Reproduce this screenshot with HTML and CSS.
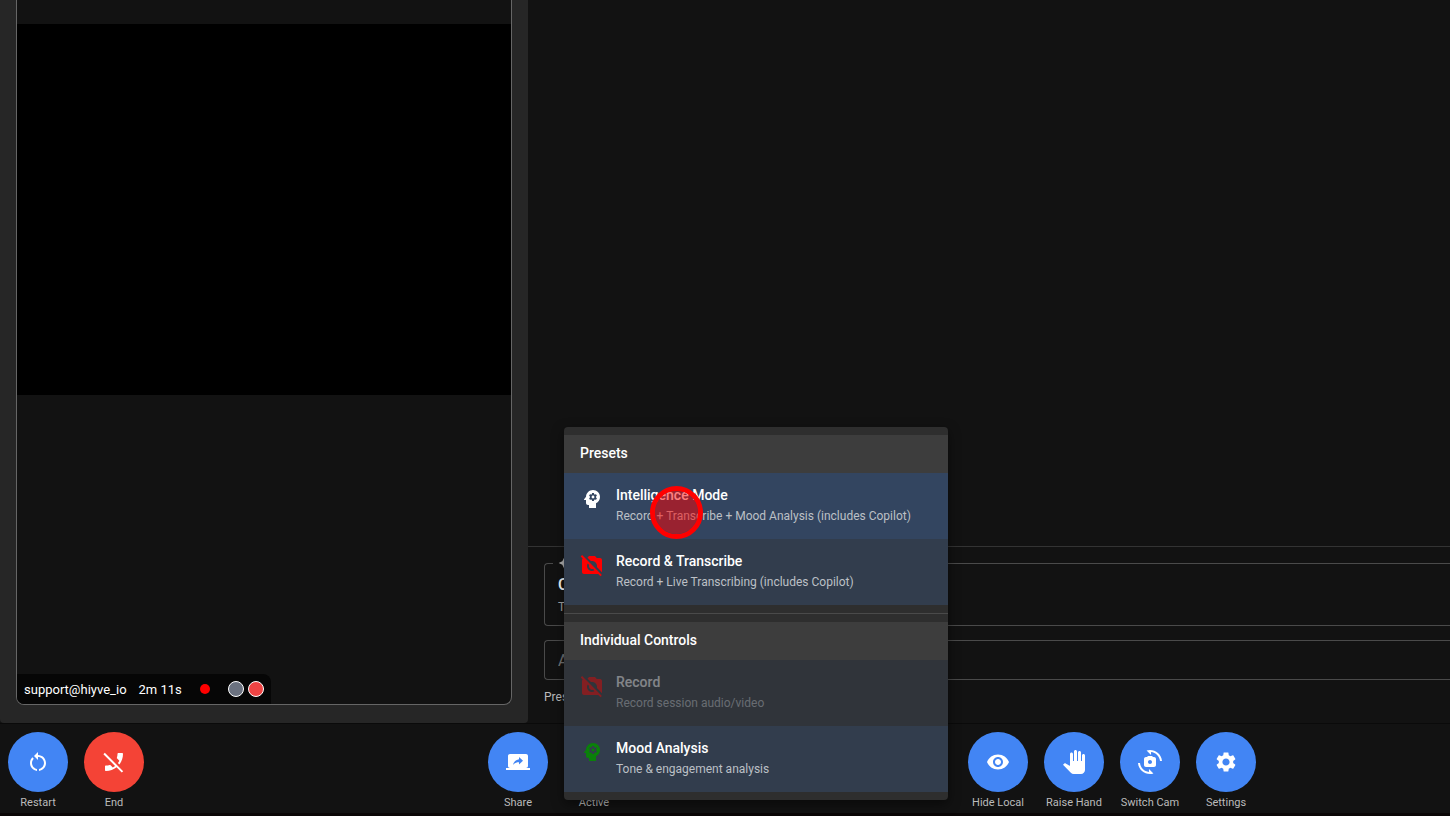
FILE: index.html
```html
<!DOCTYPE html>
<html lang="en">
<head>
    <meta charset="UTF-8">
    <meta name="viewport" content="width=device-width, initial-scale=1.0">
    <title>Hiyve Room</title>
    <link rel="stylesheet" href="styles.css">
</head>
<body>

    <!-- Shared icons -->
    <svg class="icon-defs" aria-hidden="true">
        <symbol id="icon-psychology" viewBox="0 0 24 24">
            <path d="M13 8.57c-.79 0-1.43.64-1.43 1.43s.64 1.43 1.43 1.43 1.43-.64 1.43-1.43-.64-1.43-1.43-1.43z"/>
            <path d="M13 3C9.25 3 6.2 5.94 6.02 9.64L4.1 12.2c-.25.33-.01.8.4.8H6v3c0 1.1.9 2 2 2h1v3h7v-4.68c2.36-1.12 4-3.53 4-6.32 0-3.87-3.13-7-7-7zm3 7c0 .13-.01.26-.02.39l.83.66c.08.06.1.16.05.25l-.8 1.39c-.05.09-.16.12-.24.09l-.99-.4c-.21.16-.43.29-.67.39L14 13.83c-.01.1-.1.17-.2.17h-1.6c-.1 0-.18-.07-.2-.17l-.15-1.06c-.25-.1-.47-.23-.68-.39l-.99.4c-.09.03-.2 0-.25-.09l-.8-1.39c-.05-.08-.03-.19.05-.25l.84-.66c-.01-.13-.02-.26-.02-.39s.02-.27.04-.39l-.85-.66c-.08-.06-.1-.16-.05-.26l.8-1.38c.05-.09.15-.12.24-.09l1 .4c.2-.15.43-.29.67-.39L12 6.17c.02-.1.1-.17.2-.17h1.6c.1 0 .18.07.2.17l.15 1.06c.24.1.46.23.67.39l1-.4c.09-.03.2 0 .24.09l.8 1.38c.05.09.03.2-.05.26l-.85.66c.03.12.04.25.04.39z"/>
        </symbol>
        <symbol id="icon-no-camera" viewBox="0 0 24 24">
            <path d="M10.94 8.12 7.48 4.66 9 3h6l1.83 2H20c1.1 0 2 .9 2 2v12c0 .05-.01.1-.02.16l-5.1-5.1c.08-.34.12-.69.12-1.06 0-2.76-2.24-5-5-5-.37 0-.72.04-1.06.12zm9.55 15.19L18.17 21H4c-1.1 0-2-.9-2-2V7c0-.59.27-1.12.68-1.49l-2-2L2.1 2.1l19.8 19.8-1.41 1.41zm-6-5.99-1.5-1.5c-.31.11-.65.18-.99.18-1.66 0-3-1.34-3-3 0-.34.07-.68.18-.98l-1.5-1.5C7.25 11.24 7 12.09 7 13c0 2.76 2.24 5 5 5 .91 0 1.76-.25 2.49-.68z"/>
        </symbol>
    </svg>

    <main class="room">
        <section class="video-panel">
            <div class="video-card">
                <div class="video"></div>
                <div class="participant">
                    <span>support@hiyve_io</span>
                    <span>2m 11s</span>
                    <span class="recording"></span>
                    <span class="status">
                        <i class="dot dot-gray"></i>
                        <i class="dot dot-red"></i>
                    </span>
                </div>
            </div>
        </section>

        <section class="side-panel">
            <div class="copilot">
                <fieldset class="copilot-info">
                    <legend>
                        <svg viewBox="0 0 24 24"><path d="M11.5 9.5 9 4 6.5 9.5 1 12l5.5 2.5L9 20l2.5-5.5L17 12zM19 9l1.25-2.75L23 5l-2.75-1.25L19 1l-1.25 2.75L15 5l2.75 1.25zM19 15l-1.25 2.75L15 19l2.75 1.25L19 23l1.25-2.75L23 19l-2.75-1.25z"/></svg>
                    </legend>
                    <h2>Copilot</h2>
                    <p>Tips</p>
                </fieldset>
                <input class="question" type="text" placeholder="Ask" aria-label="Ask">
                <p class="hint">Press</p>
            </div>
        </section>
    </main>

    <footer class="toolbar">
        <div class="group">
            <div class="control">
                <button id="restart" aria-labelledby="restart-label"><svg viewBox="0 0 24 24"><path d="M12 5V2L8 6l4 4V7c3.31 0 6 2.69 6 6 0 2.97-2.17 5.43-5 5.91v2.02c3.95-.49 7-3.85 7-7.93 0-4.42-3.58-8-8-8zm-6 8c0-1.65.67-3.15 1.76-4.24L6.34 7.34C4.9 8.79 4 10.79 4 13c0 4.08 3.05 7.44 7 7.93v-2.02c-2.83-.48-5-2.94-5-5.91z"/></svg></button>
                <label id="restart-label" for="restart">Restart</label>
            </div>
            <div class="control">
                <button id="end" class="danger" aria-labelledby="end-label"><svg viewBox="0 0 24 24"><path d="M17.34 14.54l-1.43-1.43c.56-.73 1.05-1.5 1.47-2.32l-2.2-2.2c-.28-.28-.36-.67-.25-1.02.37-1.12.57-2.32.57-3.57 0-.55.45-1 1-1H20c.55 0 1 .45 1 1 0 3.98-1.37 7.64-3.66 10.54zm-2.82 2.81C11.63 19.64 7.97 21 4 21c-.55 0-1-.45-1-1v-3.49c0-.55.45-1 1-1 1.24 0 2.45-.2 3.57-.57.35-.12.75-.03 1.02.24l2.2 2.2c.81-.42 1.58-.9 2.3-1.46L1.39 4.22l1.42-1.41L21.19 21.2l-1.41 1.41-5.26-5.26z"/></svg></button>
                <label id="end-label" for="end">End</label>
            </div>
        </div>

        <div class="group">
            <div class="control">
                <button id="share" aria-labelledby="share-label"><svg viewBox="0 0 24 24"><path d="M20 18c1.1 0 1.99-.9 1.99-2L22 6c0-1.11-.9-2-2-2H4c-1.11 0-2 .89-2 2v10c0 1.1.89 2 2 2H0v2h24v-2h-4zm-7-3.53v-2.19c-2.78 0-4.61.85-6 2.72.56-2.67 2.11-5.33 6-5.87V7l4 3.73-4 3.74z"/></svg></button>
                <label id="share-label" for="share">Share</label>
            </div>
            <div class="control">
                <button id="active" aria-labelledby="active-label"><svg><use href="#icon-psychology"/></svg></button>
                <label id="active-label" for="active">Active</label>

                <!-- Menu opened from the Active button -->
                <div class="menu">
                    <h3>Presets</h3>
                    <button class="menu-item selected">
                        <svg><use href="#icon-psychology"/></svg>
                        <span>
                            <strong>Intelligence Mode</strong>
                            <small>Record + Transcribe + Mood Analysis (includes Copilot)</small>
                        </span>
                        <i class="click-marker"></i>
                    </button>
                    <button class="menu-item">
                        <svg class="red"><use href="#icon-no-camera"/></svg>
                        <span>
                            <strong>Record &amp; Transcribe</strong>
                            <small>Record + Live Transcribing (includes Copilot)</small>
                        </span>
                    </button>
                    <hr>
                    <h3>Individual Controls</h3>
                    <button class="menu-item" disabled>
                        <svg class="red"><use href="#icon-no-camera"/></svg>
                        <span>
                            <strong>Record</strong>
                            <small>Record session audio/video</small>
                        </span>
                    </button>
                    <button class="menu-item">
                        <svg class="green"><use href="#icon-psychology"/></svg>
                        <span>
                            <strong>Mood Analysis</strong>
                            <small>Tone &amp; engagement analysis</small>
                        </span>
                    </button>
                </div>
            </div>
        </div>

        <div class="group">
            <div class="control">
                <button id="hide" aria-labelledby="hide-label"><svg viewBox="0 0 24 24"><path d="M12 4.5C7 4.5 2.73 7.61 1 12c1.73 4.39 6 7.5 11 7.5s9.27-3.11 11-7.5c-1.73-4.39-6-7.5-11-7.5zM12 17c-2.76 0-5-2.24-5-5s2.24-5 5-5 5 2.24 5 5-2.24 5-5 5zm0-8c-1.66 0-3 1.34-3 3s1.34 3 3 3 3-1.34 3-3-1.34-3-3-3z"/></svg></button>
                <label id="hide-label" for="hide">Hide Local</label>
            </div>
            <div class="control">
                <button id="hand" aria-labelledby="hand-label"><svg viewBox="0 0 24 24"><path d="M23 5.5V20c0 2.2-1.8 4-4 4h-7.3c-1.08 0-2.1-.43-2.85-1.19L1 14.83s1.26-1.23 1.3-1.25c.22-.19.49-.29.79-.29.22 0 .42.06.6.16.04.01 4.31 2.46 4.31 2.46V4c0-.83.67-1.5 1.5-1.5S11 3.17 11 4v7h1V1.5c0-.83.67-1.5 1.5-1.5S15 .67 15 1.5V11h1V2.5c0-.83.67-1.5 1.5-1.5s1.5.67 1.5 1.5V11h1V5.5c0-.83.67-1.5 1.5-1.5s1.5.67 1.5 1.5z"/></svg></button>
                <label id="hand-label" for="hand">Raise Hand</label>
            </div>
            <div class="control">
                <button id="camera" aria-labelledby="camera-label"><svg viewBox="0 0 24 24"><path d="M16 7h-1l-1-1h-4L9 7H8c-1.1 0-2 .9-2 2v6c0 1.1.9 2 2 2h8c1.1 0 2-.9 2-2V9c0-1.1-.9-2-2-2zm-4 7c-1.1 0-2-.9-2-2s.9-2 2-2 2 .9 2 2-.9 2-2 2z"/><path d="M8.57.51l4.48 4.48V2.04c4.72.47 8.48 4.23 8.95 8.95h2C23.34 3.02 15.49-1.59 8.57.51zM10.95 21.96C6.23 21.49 2.47 17.73 2 13.01H0c.66 7.97 8.51 12.58 15.43 10.48l-4.48-4.48v2.95z"/></svg></button>
                <label id="camera-label" for="camera">Switch Cam</label>
            </div>
            <div class="control">
                <button id="settings" aria-labelledby="settings-label"><svg viewBox="0 0 24 24"><path d="M19.14 12.94c.04-.3.06-.61.06-.94 0-.32-.02-.64-.07-.94l2.03-1.58c.18-.14.23-.41.12-.61l-1.92-3.32c-.12-.22-.37-.29-.59-.22l-2.39.96c-.5-.38-1.03-.7-1.62-.94l-.36-2.54c-.04-.24-.24-.41-.48-.41h-3.84c-.24 0-.43.17-.47.41l-.36 2.54c-.59.24-1.13.57-1.62.94l-2.39-.96c-.22-.08-.47 0-.59.22L2.74 8.87c-.12.21-.08.47.12.61l2.03 1.58c-.05.3-.09.63-.09.94s.02.64.07.94l-2.03 1.58c-.18.14-.23.41-.12.61l1.92 3.32c.12.22.37.29.59.22l2.39-.96c.5.38 1.03.7 1.62.94l.36 2.54c.05.24.24.41.48.41h3.84c.24 0 .44-.17.47-.41l.36-2.54c.59-.24 1.13-.56 1.62-.94l2.39.96c.22.08.47 0 .59-.22l1.92-3.32c.12-.22.07-.47-.12-.61l-2.01-1.58zM12 15.6c-1.98 0-3.6-1.62-3.6-3.6s1.62-3.6 3.6-3.6 3.6 1.62 3.6 3.6-1.62 3.6-3.6 3.6z"/></svg></button>
                <label id="settings-label" for="settings">Settings</label>
            </div>
        </div>
    </footer>

</body>
</html>
```
FILE: styles.css
```css
* {
    box-sizing: border-box;
}

body {
    margin: 0;
    min-height: 100vh;
    display: flex;
    flex-direction: column;
    background-color: #121212;
    color: white;
    font-family: Roboto, sans-serif;
    font-size: 14px;
}

h2, h3, p {
    margin: 0;
}

button, input {
    font-family: inherit;
}

button {
    border: none;
    padding: 0;
    color: white;
    cursor: pointer;
}

svg {
    width: 24px;
    height: 24px;
    fill: currentColor;
    flex-shrink: 0;
}

.icon-defs {
    display: none;
}

.room {
    flex: 1;
    display: grid;
    grid-template-columns: 528fr 922fr;
}

/* Video */
.video-panel {
    display: flex;
    padding: 0 16px 18px;
    background-color: #262626;
    border-radius: 0 0 4px 4px;
}

.video-card {
    flex: 1;
    display: flex;
    flex-direction: column;
    justify-content: space-between;
    padding-top: 24px;
    background-color: #121212;
    border: 1px solid #666;
    border-top: none;
    border-radius: 0 0 8px 8px;
    overflow: hidden;
}

.video {
    aspect-ratio: 4 / 3;
    background-color: black;
}

.participant {
    align-self: flex-start;
    display: flex;
    align-items: center;
    gap: 12px;
    height: 30px;
    padding: 0 7px;
    background-color: #060606;
    border-radius: 0 8px 0 0;
    font-size: 13px;
}

.recording {
    width: 10px;
    height: 10px;
    margin: 0 6px;
    border-radius: 50%;
    background-color: red;
}

.status {
    display: flex;
    gap: 4px;
}

.dot {
    width: 16px;
    height: 16px;
    border: 1px solid white;
    border-radius: 50%;
}

.dot-gray {
    background-color: #6b7280;
}

.dot-red {
    background-color: #ef4444;
}

/* Copilot */
.side-panel {
    display: flex;
    flex-direction: column;
    justify-content: flex-end;
}

.copilot {
    display: flex;
    flex-direction: column;
    padding: 8px 0 17px 16px;
    border-top: 1px solid #333;
}

.copilot-info {
    margin: 0;
    padding: 2px 13px 8px;
    border: 1px solid #4a4a4a;
    border-right: none;
    border-radius: 4px 0 0 4px;
}

.copilot-info legend {
    height: 16px;
    margin-left: -5px;
    padding: 0 5px;
    color: #bbb;
}

.copilot-info legend svg {
    display: block;
    width: 16px;
    height: 16px;
}

.copilot-info h2 {
    font-size: 16px;
    font-weight: 500;
    line-height: 24px;
}

.copilot-info p {
    font-size: 12px;
    line-height: 20px;
    color: #aaa;
}

.question {
    height: 40px;
    margin-top: 14px;
    padding: 0 13px;
    background: none;
    border: 1px solid #4a4a4a;
    border-right: none;
    border-radius: 4px 0 0 4px;
    color: white;
    font-size: 16px;
}

.question::placeholder {
    color: #777;
}

.hint {
    margin-top: 8px;
    font-size: 12px;
    line-height: 18px;
    color: #bbb;
}

/* Toolbar */
.toolbar {
    display: flex;
    justify-content: space-between;
    padding: 8px 194px 2px 8px;
    border-top: 1px solid #0a0a0a;
    border-bottom: 3px solid #0a0606;
}

.group {
    display: flex;
    gap: 16px;
}

.control {
    position: relative;
    display: flex;
    flex-direction: column;
    align-items: center;
    gap: 3px;
    width: 60px;
}

.control > button {
    display: flex;
    justify-content: center;
    align-items: center;
    width: 60px;
    height: 60px;
    border-radius: 50%;
    background-color: #4285f4;
}

.control > button.danger {
    background-color: #f44336;
}

.control > label {
    font-size: 11px;
    line-height: 16px;
    white-space: nowrap;
    color: #bbb;
}

/* Recording menu */
.menu {
    position: absolute;
    left: 0;
    bottom: 11px;
    width: 384px;
    padding: 8px 0;
    background-color: #2e2e2e;
    border-radius: 4px;
    box-shadow: 0 4px 12px rgba(0, 0, 0, 0.5);
}

.menu h3 {
    padding: 0 16px 2px;
    background-color: #3d3d3d;
    font-size: 14px;
    font-weight: 500;
    line-height: 36px;
}

.menu hr {
    height: 1px;
    margin: 8px 0;
    border: none;
    background-color: #4a4a4a;
}

.menu-item {
    position: relative;
    display: flex;
    gap: 12px;
    width: 100%;
    height: 66px;
    padding: 12px 16px;
    background-color: #323d4d;
    text-align: left;
}

.menu-item.selected {
    background-color: #334560;
}

.menu-item:disabled {
    background-color: #30343a;
    cursor: default;
}

.menu-item:disabled > svg,
.menu-item:disabled > span {
    opacity: 0.4;
}

.menu-item svg {
    margin-top: 2px;
}

.menu-item span {
    display: flex;
    flex-direction: column;
}

.menu-item strong {
    font-size: 14px;
    font-weight: 500;
    line-height: 20px;
}

.menu-item small {
    font-size: 12px;
    line-height: 22px;
    white-space: nowrap;
    color: #bcc0c6;
}

.red {
    color: red;
}

.green {
    color: #0a800a;
}

.click-marker {
    position: absolute;
    left: 86px;
    top: 13px;
    width: 53px;
    height: 53px;
    border: 5px solid red;
    border-radius: 50%;
    background-color: rgba(255, 0, 0, 0.5);
    background-clip: padding-box;
}
```
